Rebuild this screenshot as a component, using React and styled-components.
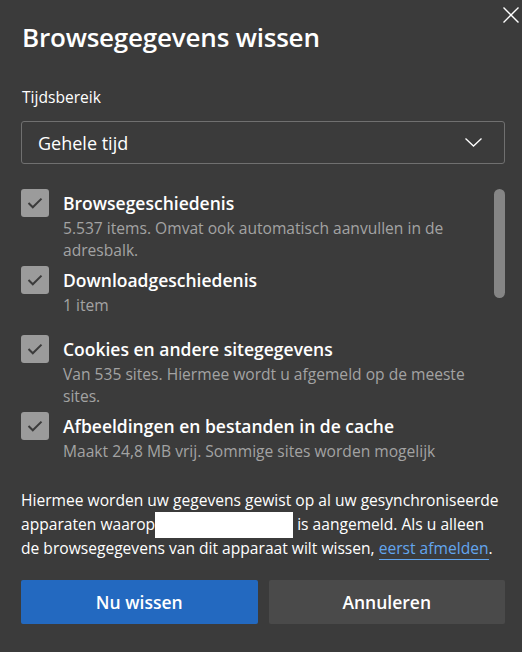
import React from "react";
import styled, { createGlobalStyle } from "styled-components";

const Global = createGlobalStyle`
  html, body { margin: 0; padding: 0; background: #3b3b3b; }
  body { font-family: "Open Sans", "Noto Sans", sans-serif; color: #fff; }
  * { box-sizing: border-box; }
`;

const Dialog = styled.div`
  width: 522px;
  height: 652px;
  background: #3b3b3b;
  padding: 0 17px 0 21px;
  display: flex;
  flex-direction: column;
  overflow: hidden;
`;

const Header = styled.div`
  display: flex;
  justify-content: space-between;
  align-items: flex-start;
`;

const Title = styled.h1`
  margin: 19px 0 0 1px;
  font-size: 26px;
  line-height: 36px;
  font-weight: 600;
  letter-spacing: -0.2px;
`;

const CloseButton = styled.button`
  margin: 7px -14px 0 0;
  width: 16px;
  height: 16px;
  padding: 0;
  border: 0;
  background: none;
  display: flex;
  cursor: pointer;
`;

const FieldLabel = styled.div`
  margin: 32px 0 0 1px;
  font-size: 15.6px;
  line-height: 20px;
`;

const Select = styled.div`
  margin-top: 14px;
  height: 43px;
  border: 1px solid #707070;
  border-radius: 3px;
  display: flex;
  align-items: center;
  justify-content: space-between;
  padding: 0 22px 0 16px;
  font-size: 18px;
`;

const ScrollArea = styled.div`
  margin-top: 25px;
  height: 272px;
  display: flex;
  overflow: hidden;
`;

const List = styled.div`
  flex: 1;
  padding-right: 12px;
`;

const Track = styled.div`
  width: 11px;
  display: flex;
  flex-direction: column;
`;

const Thumb = styled.div`
  height: 109px;
  border-radius: 6px;
  background: #858585;
`;

const Item = styled.div`
  display: flex;
  gap: 14px;
  min-height: 64px;
  margin-bottom: 5px;
`;

const Box = styled.div`
  flex: none;
  width: 28px;
  height: 28px;
  border-radius: 3px;
  background: #9b9b9b;
  display: flex;
  align-items: center;
  justify-content: center;
`;

const ItemText = styled.div`
  display: flex;
  flex-direction: column;
`;

const ItemLabel = styled.div`
  font-size: 17.5px;
  line-height: 28px;
  font-weight: 600;
`;

const ItemDesc = styled.div`
  font-size: 15.6px;
  line-height: 22px;
  color: #a3a3a3;
`;

const Notice = styled.p`
  margin: 29px 0 0;
  font-size: 15.6px;
  line-height: 21.5px;
`;

const Redacted = styled.span`
  display: inline-block;
  width: 138px;
  height: 26px;
  background: #fff;
  vertical-align: -8px;
`;

const Link = styled.a`
  color: #63a6ef;
  text-decoration: none;
  border-bottom: 1px solid #63a6ef;
`;

const Buttons = styled.div`
  margin-top: 21px;
  display: grid;
  grid-template-columns: 1fr 1fr;
  gap: 11px;
`;

const Button = styled.button`
  height: 44px;
  border: 0;
  border-radius: 2px;
  font-family: inherit;
  font-size: 17.5px;
  font-weight: 600;
  color: #fff;
  background: ${(p) => (p.$primary ? "#2369c0" : "#4a4a4a")};
  cursor: pointer;
`;

const Check = () => (
  <svg width="16" height="12" viewBox="0 0 16 12">
    <path d="M1.5 6 L5.8 10.3 L14.5 1.6" fill="none" stroke="#3b3b3b" strokeWidth="2" />
  </svg>
);

const items = [
  { label: "Browsegeschiedenis", desc: "5.537 items. Omvat ook automatisch aanvullen in de adresbalk." },
  { label: "Downloadgeschiedenis", desc: "1 item" },
  { label: "Cookies en andere sitegegevens", desc: "Van 535 sites. Hiermee wordt u afgemeld op de meeste sites." },
  { label: "Afbeeldingen en bestanden in de cache", desc: "Maakt 24,8 MB vrij. Sommige sites worden mogelijk langzamer geladen bij uw volgende bezoek." },
];

export default function App() {
  return (
    <>
      <Global />
      <Dialog>
        <Header>
          <Title>Browsegegevens wissen</Title>
          <CloseButton aria-label="Sluiten">
            <svg width="16" height="16" viewBox="0 0 16 16">
              <path d="M0.5 0.5 L15.5 15.5 M15.5 0.5 L0.5 15.5" stroke="#fff" strokeWidth="1.4" />
            </svg>
          </CloseButton>
        </Header>
        <FieldLabel>Tijdsbereik</FieldLabel>
        <Select>
          <span>Gehele tijd</span>
          <svg width="17" height="9" viewBox="0 0 17 9">
            <path d="M0.5 0.5 L8.5 8 L16.5 0.5" fill="none" stroke="#fff" strokeWidth="1.3" />
          </svg>
        </Select>
        <ScrollArea>
          <List>
            {items.map((it) => (
              <Item key={it.label}>
                <Box><Check /></Box>
                <ItemText>
                  <ItemLabel>{it.label}</ItemLabel>
                  <ItemDesc>{it.desc}</ItemDesc>
                </ItemText>
              </Item>
            ))}
          </List>
          <Track><Thumb /></Track>
        </ScrollArea>
        <Notice>
          Hiermee worden uw gegevens gewist op al uw gesynchroniseerde apparaten waarop<Redacted /> is aangemeld. Als u alleen de browsegegevens van dit apparaat wilt wissen, <Link href="#">eerst afmelden</Link>.
        </Notice>
        <Buttons>
          <Button $primary>Nu wissen</Button>
          <Button>Annuleren</Button>
        </Buttons>
      </Dialog>
    </>
  );
}
